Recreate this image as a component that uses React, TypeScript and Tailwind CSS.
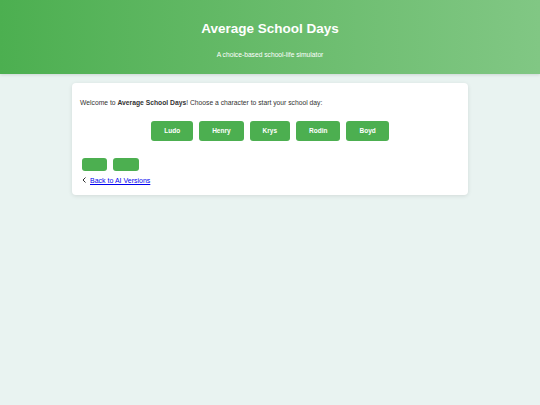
export default function App() {
  const characters = ["Ludo", "Henry", "Krys", "Rodin", "Boyd"];

  return (
    <div className="min-h-[405px] bg-[#e9f3f1] font-['Liberation_Sans',Arial,sans-serif]">
      <header className="h-[74px] bg-gradient-to-r from-[#4caf50] to-[#81c784] text-white text-center flex flex-col items-center shadow-[0_1px_3px_rgba(0,0,0,0.12)]">
        <h1 className="mt-[20px] text-[13.5px] leading-[18px] font-bold">Average School Days</h1>
        <p className="mt-[12px] text-[6.7px] leading-[9px]">A choice-based school-life simulator</p>
      </header>

      <main className="mt-[9px] mx-auto w-[396px] bg-white rounded-[4px] shadow-[0_1px_4px_rgba(0,0,0,0.1)] px-[8px] pt-[15px] pb-[9px]">
        <p className="text-[6.75px] leading-[10px] text-[#333]">
          Welcome to <strong>Average School Days</strong>! Choose a character to start your school day:
        </p>

        <div className="mt-[13px] flex justify-center gap-[6px]">
          {characters.map((name) => (
            <button
              key={name}
              className="h-[20px] px-[13px] rounded-[3px] bg-[#4caf50] text-white text-[6.5px] font-bold"
            >
              {name}
            </button>
          ))}
        </div>

        <div className="mt-[17px] ml-[2px] flex gap-[6px]">
          <button className="w-[25px] h-[13px] rounded-[3px] bg-[#4caf50]" />
          <button className="w-[26px] h-[13px] rounded-[3px] bg-[#4caf50]" />
        </div>

        <div className="mt-[5px] ml-[2px] flex items-center gap-[3px]">
          <svg width="5" height="6" viewBox="0 0 5 6" className="-mt-[3px]">
            <path d="M3.5 0.5 L1 3 L3.5 5.5" stroke="#333" strokeWidth="1" fill="none" />
          </svg>
          <a href="#" className="text-[7px] leading-[10px] text-[#0000ee] underline">
            Back to AI Versions
          </a>
        </div>
      </main>
    </div>
  );
}
